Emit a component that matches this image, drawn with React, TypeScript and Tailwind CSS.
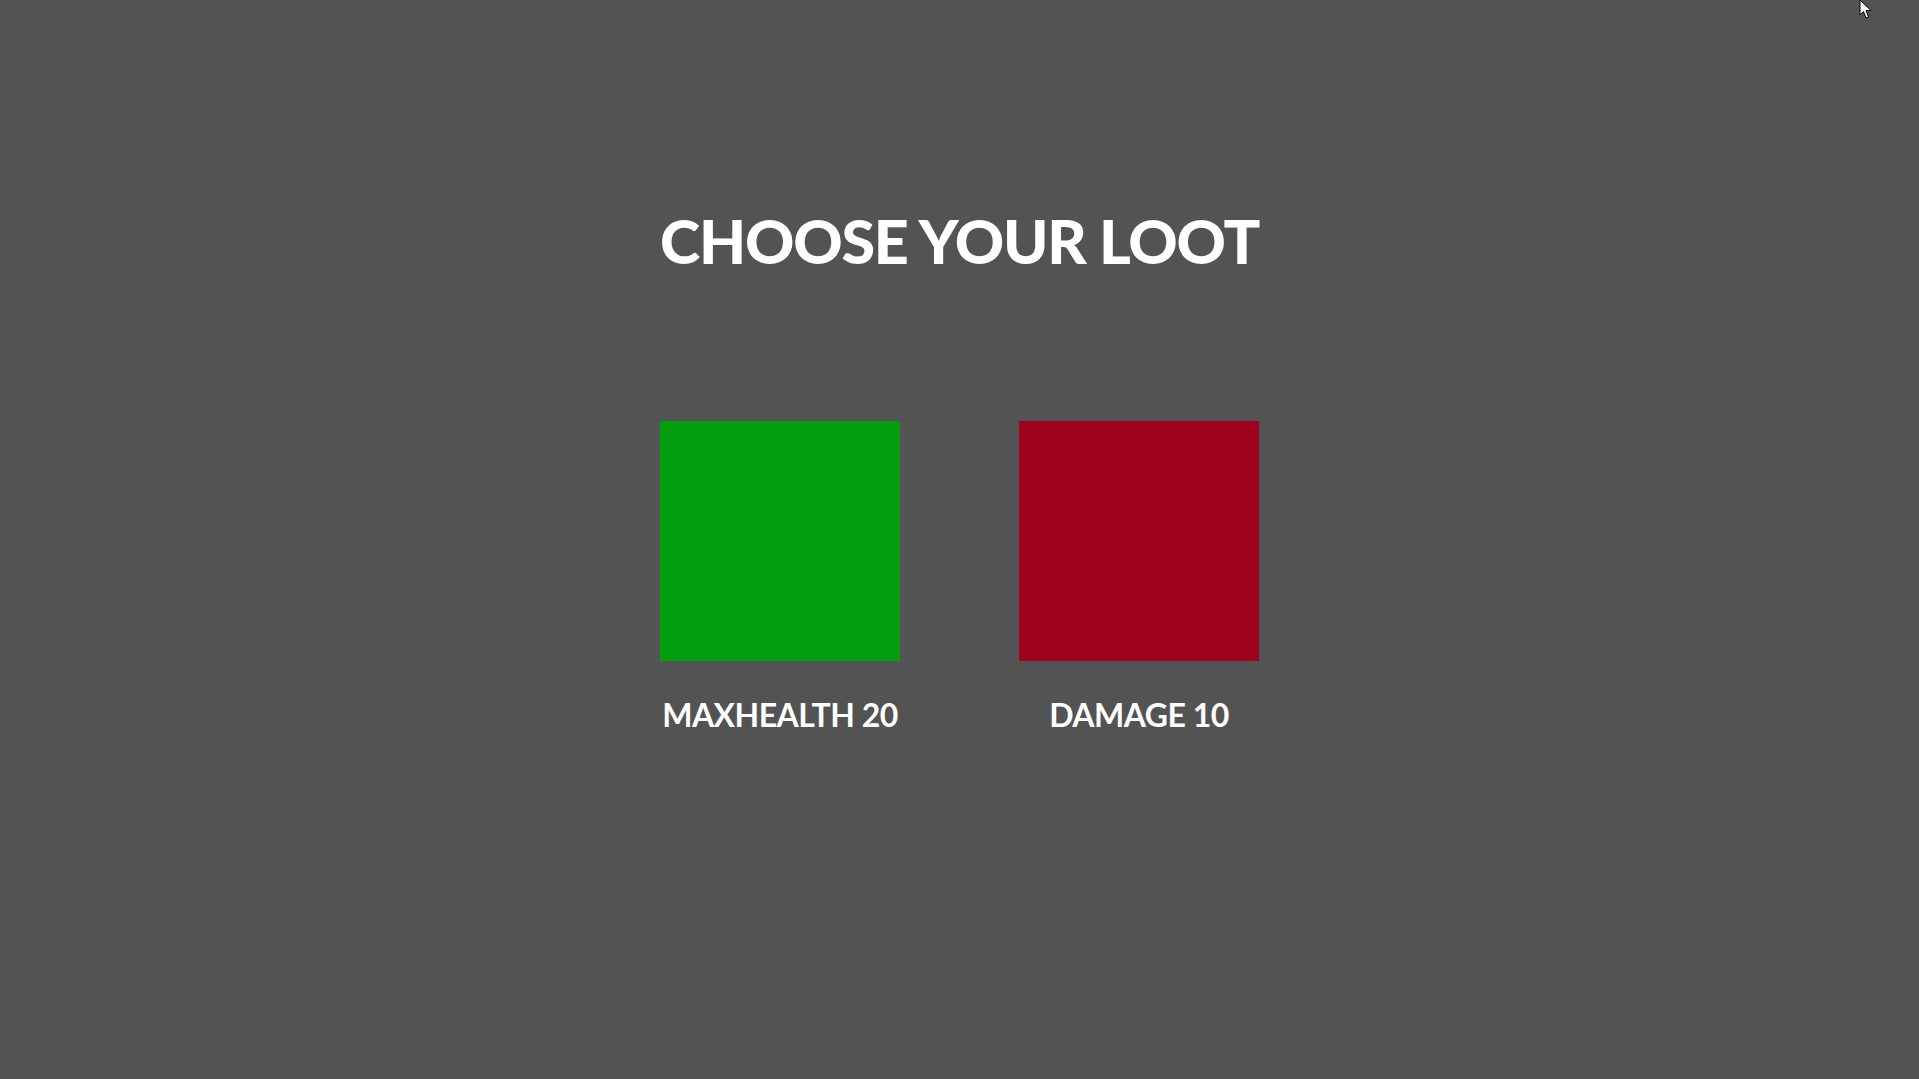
export default function App() {
  const loot = [
    { label: "MAXHEALTH 20", color: "bg-[#029e10]" },
    { label: "DAMAGE 10", color: "bg-[#9e001e]" },
  ];

  return (
    <main
      className="relative w-full h-[1079px] bg-[#535353] flex flex-col items-center pt-[210px] overflow-hidden"
      style={{ fontFamily: "Lato, 'Noto Sans', sans-serif" }}
    >
      <h1 className="text-white text-[61px] leading-none font-black tracking-[-1.2px]">
        CHOOSE YOUR LOOT
      </h1>

      <div className="mt-[150px] grid grid-cols-[240px_240px] gap-x-[119px]">
        {loot.map((item) => (
          <div key={item.label} className="flex flex-col items-center">
            <div className={`w-[240px] h-[240px] ${item.color}`} />
            <p className="mt-[38px] whitespace-nowrap text-white text-[32px] leading-none font-bold tracking-[-0.5px]">
              {item.label}
            </p>
          </div>
        ))}
      </div>

      {/* mouse pointer left in the capture */}
      <svg
        className="absolute left-[1859px] top-0"
        width="14"
        height="20"
        viewBox="0 0 14 20"
      >
        <path d="M1 0 L1 15 L4.5 11.5 L7 18 L9.5 17 L7 10.5 L12 10.5 Z" fill="white" stroke="black" strokeWidth="1" />
      </svg>
    </main>
  );
}
